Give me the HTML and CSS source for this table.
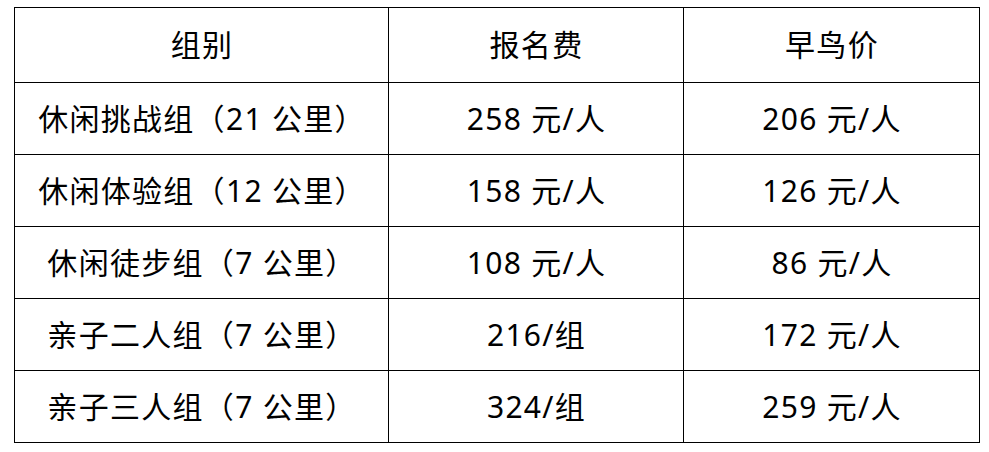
FILE: index.html
```html
<!DOCTYPE html>
<html lang="zh">
<head>
<meta charset="utf-8">
<link rel="stylesheet" href="styles.css">
</head>
<body>
<table class="fees">
  <colgroup><col class="c1"><col class="c2"><col class="c3"></colgroup>
  <thead>
    <tr class="head"><th>组别</th><th>报名费</th><th>早鸟价</th></tr>
  </thead>
  <tbody>
    <tr><td>休闲挑战组（21 公里）</td><td>258 元/人</td><td>206 元/人</td></tr>
    <tr><td>休闲体验组（12 公里）</td><td>158 元/人</td><td>126 元/人</td></tr>
    <tr><td>休闲徒步组（7 公里）</td><td>108 元/人</td><td>86 元/人</td></tr>
    <tr><td>亲子二人组（7 公里）</td><td>216/组</td><td>172 元/人</td></tr>
    <tr><td>亲子三人组（7 公里）</td><td>324/组</td><td>259 元/人</td></tr>
  </tbody>
</table>
</body>
</html>
```
FILE: styles.css
```css
html, body {
  margin: 0;
  padding: 0;
  background: #fff;
}
body {
  padding: 7px 0 0 14px;
  font-family: "Noto Sans", "Noto Sans CJK SC", sans-serif;
  color: #000;
}
.fees {
  border-collapse: collapse;
  width: 965px;
  table-layout: fixed;
}
.c1 { width: 374px; }
.c2 { width: 295px; }
.c3 { width: 296px; }
.fees th, .fees td {
  border: 1px solid #000;
  text-align: center;
  font-size: 30px;
  font-weight: 400;
  letter-spacing: 1.3px;
  padding: 0 0 0 1px;
  height: 71px;
  line-height: 1;
}
.fees .head th {
  height: 74px;
}
```
